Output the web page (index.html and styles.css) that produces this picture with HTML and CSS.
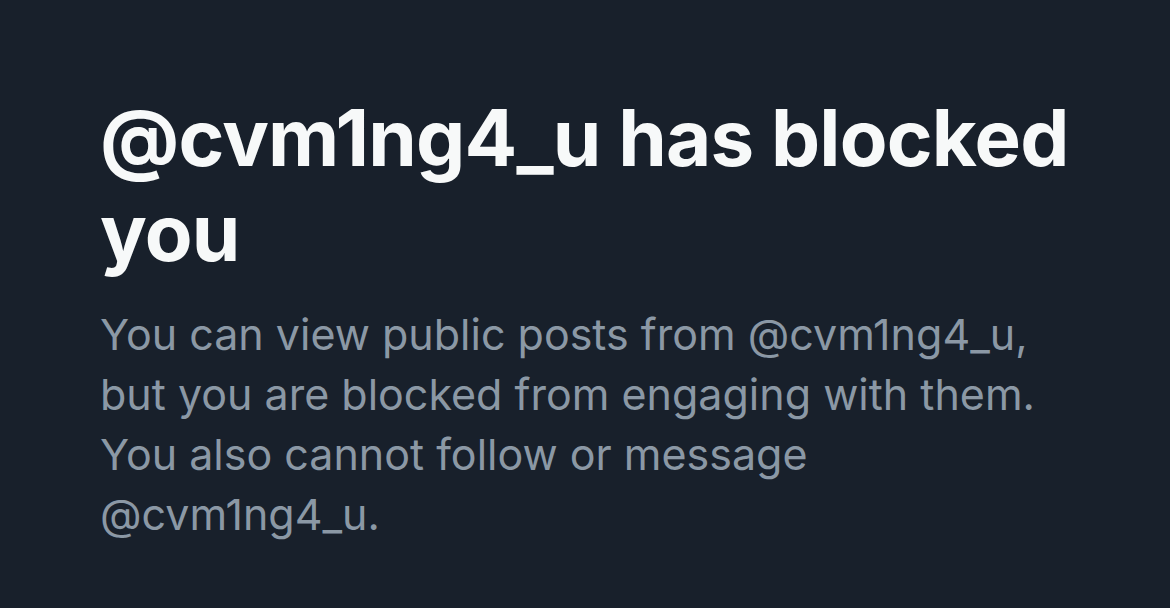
FILE: index.html
```html
<!DOCTYPE html>
<html>
<head>
<meta charset="utf-8">
<link rel="stylesheet" href="styles.css">
</head>
<body>
<main class="notice">
  <h1 class="notice-title">@cvm1ng4_u has blocked you</h1>
  <p class="notice-text">You can view public posts from @cvm1ng4_u, but you are blocked from engaging with them. You also cannot follow or message @cvm1ng4_u.</p>
</main>
</body>
</html>
```
FILE: styles.css
```css
html, body {
  margin: 0;
  padding: 0;
  background: #18202b;
  height: 100%;
}
.notice {
  padding: 90px 60px 0 100px;
  font-family: Inter, "Noto Sans", sans-serif;
}
.notice-title {
  margin: 0;
  color: #f7f9f9;
  font-size: 78px;
  font-weight: 700;
  line-height: 95px;
  letter-spacing: -0.8px;
}
.notice-text {
  margin: 24px 0 0;
  color: #8b98a5;
  font-size: 43px;
  font-weight: 400;
  line-height: 60px;
  max-width: 960px;
}
```
